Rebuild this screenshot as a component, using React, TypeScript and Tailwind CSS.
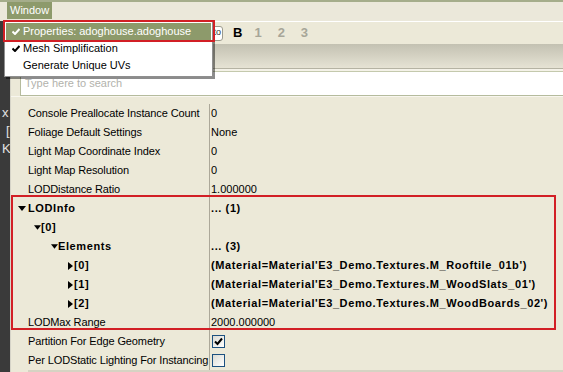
import React from "react";

type Row = {
  name: string;
  value?: string;
  bold?: boolean;
  vbold?: boolean;
  tri?: "down" | "right";
  pad: string;
  box?: string;
  check?: boolean;
};

const rows: Row[] = [
  { name: "Console Preallocate Instance Count", value: "0", pad: "pl-[17px]" },
  { name: "Foliage Default Settings", value: "None", pad: "pl-[17px]" },
  { name: "Light Map Coordinate Index", value: "0", pad: "pl-[17px]" },
  { name: "Light Map Resolution", value: "0", pad: "pl-[17px]" },
  { name: "LODDistance Ratio", value: "1.000000", pad: "pl-[17px]" },
  { name: "LODInfo", value: "... (1)", bold: true, vbold: true, tri: "down", pad: "pl-[7px]", box: "w-[10px]" },
  { name: "[0]", value: "", bold: true, tri: "down", pad: "pl-[23px]", box: "w-[7px]" },
  { name: "Elements", value: "... (3)", bold: true, vbold: true, tri: "down", pad: "pl-[40px]", box: "w-[7px]" },
  { name: "[0]", value: "(Material=Material'E3_Demo.Textures.M_Rooftile_01b')", bold: true, vbold: true, tri: "right", pad: "pl-[57px]", box: "w-[6px]" },
  { name: "[1]", value: "(Material=Material'E3_Demo.Textures.M_WoodSlats_01')", bold: true, vbold: true, tri: "right", pad: "pl-[57px]", box: "w-[6px]" },
  { name: "[2]", value: "(Material=Material'E3_Demo.Textures.M_WoodBoards_02')", bold: true, vbold: true, tri: "right", pad: "pl-[57px]", box: "w-[6px]" },
  { name: "LODMax Range", value: "2000.000000", pad: "pl-[17px]" },
  { name: "Partition For Edge Geometry", check: true, pad: "pl-[17px]" },
  { name: "Per LODStatic Lighting For Instancing", check: false, pad: "pl-[17px]" },
];

function Tri({ dir }: { dir: "down" | "right" }) {
  return dir === "down" ? (
    <svg width="8" height="5" viewBox="0 0 8 5">
      <path d="M0 0H8L4 5Z" fill="#000" />
    </svg>
  ) : (
    <svg width="5" height="8" viewBox="0 0 5 8">
      <path d="M0 0L5 4L0 8Z" fill="#000" />
    </svg>
  );
}

function Check({ color }: { color: string }) {
  return (
    <svg width="8" height="7" viewBox="0 0 8 7">
      <path d="M0.5 3.5L3 6L7.5 1" stroke={color} strokeWidth="2" fill="none" />
    </svg>
  );
}

function CheckBox({ on }: { on: boolean }) {
  return (
    <span className="flex h-[13px] w-[13px] items-center justify-center border border-[#1c5180] bg-linear-to-br from-[#dcdcd4] to-white">
      {on && (
        <svg width="9" height="9" viewBox="0 0 9 9">
          <path d="M1 4.5L3.5 7L8 1.5" stroke="#000" strokeWidth="2" fill="none" />
        </svg>
      )}
    </span>
  );
}

export default function App() {
  return (
    <div className="relative h-[372px] w-[563px] overflow-hidden bg-[#ece9d8] text-[11px] text-black [font-family:'Liberation_Sans',Arial,sans-serif]">
      {/* menu bar */}
      <div className="flex h-[21px] border-t-2 border-[#a5ad8b] bg-[#ebe8da]">
        <span className="ml-[7px] flex h-[17px] items-center bg-[#8d9a6b] px-[3px] text-white">Window</span>
      </div>

      <div className="flex h-[351px] overflow-hidden">
        {/* dark side strip */}
        <div className="flex w-[10px] shrink-0 flex-col overflow-hidden bg-[#3a3a3a] pt-[83px] text-[13px] leading-[18px] text-[#e2e2e2]">
          <span className="pl-[2px]">x</span>
          <span className="pl-[6px]">[</span>
          <span className="pl-[2px]">K</span>
        </div>

        {/* panel */}
        <div className="flex flex-1 flex-col overflow-hidden border-l border-[#d6d4c8]">
          {/* toolbar */}
          <div className="flex h-[23px] shrink-0 items-center border-t border-[#ffffff] bg-[#ece9d8]">
            <span className="ml-[139px] flex h-[15px] w-[73px] items-center justify-end rounded-[3px] border border-[#9c9a8c] bg-white pr-[1px] text-[9px] text-[#333]">
              Auto
            </span>
            <span className="ml-[10px] text-[13px] font-bold">B</span>
            <span className="ml-[12px] text-[13px] font-bold text-[#a7a698]">1</span>
            <span className="ml-[16px] text-[13px] font-bold text-[#a7a698]">2</span>
            <span className="ml-[16px] text-[13px] font-bold text-[#a7a698]">3</span>
          </div>
          {/* tab band */}
          <div className="h-[24px] shrink-0 bg-linear-to-b from-[#c3c1b2] to-[#e6e3d4]" />
          <div className="h-[4px] shrink-0 border-t border-b border-t-[#b5b3a3] border-b-[#c4c9ad] bg-[#f4f2e8]" />
          {/* search */}
          <div className="flex h-[24px] shrink-0 pl-[9px]">
            <div className="flex flex-1 items-center border-l border-b border-[#b5bb9d] bg-white pl-[4px] text-[#b2b2ac]">
              Type here to search
            </div>
          </div>
          <div className="h-[8px] shrink-0 border-t border-[#f8f6ee]" />

          {/* property rows */}
          <div className="flex shrink-0 flex-col">
            {rows.map((r, i) => (
              <div key={i} className="flex h-[19px] shrink-0 items-center">
                <div className={`flex h-full w-[199px] shrink-0 items-center overflow-hidden whitespace-nowrap border-r border-[#aca899] ${r.pad}`}>
                  {r.tri && (
                    <span className={`flex shrink-0 items-center ${r.box}`}>
                      <Tri dir={r.tri} />
                    </span>
                  )}
                  <span className={r.bold ? "font-bold tracking-[0.6px]" : "tracking-[-0.12px]"}>{r.name}</span>
                </div>
                <div className="flex h-full flex-1 items-center whitespace-nowrap pl-[1px]">
                  {r.check !== undefined ? (
                    <span className="pl-[1px]">
                      <CheckBox on={r.check} />
                    </span>
                  ) : (
                    <span className={r.vbold ? "font-bold tracking-[0.6px]" : ""}>{r.value}</span>
                  )}
                </div>
              </div>
            ))}
            <div className="flex h-[19px] shrink-0">
              <div className="w-[17px] shrink-0" />
              <div className="flex-1 bg-[#d6d3c3]" />
            </div>
          </div>
        </div>
      </div>

      {/* dropdown menu (overlay) */}
      <div className="absolute left-[4px] top-[21px] flex h-[56px] w-[209px] flex-col border border-[#8f8f8f] bg-white p-[1px] shadow-[2px_2px_0_rgba(0,0,0,0.45)]">
        <div className="flex h-[17px] shrink-0 items-center bg-[#8d9a6b] text-white">
          <span className="ml-[6px] w-[11px]">
            <Check color="#fff" />
          </span>
          <span>Properties: adoghouse.adoghouse</span>
        </div>
        <div className="flex h-[17px] shrink-0 items-center">
          <span className="ml-[6px] w-[11px]">
            <Check color="#000" />
          </span>
          <span>Mesh Simplification</span>
        </div>
        <div className="flex h-[17px] shrink-0 items-center">
          <span className="ml-[17px]">Generate Unique UVs</span>
        </div>
      </div>

      {/* red annotation boxes */}
      <div className="absolute left-[3px] top-[20px] h-[22px] w-[212px] border-2 border-[#d21f25]" />
      <div className="absolute left-[11px] top-[195px] h-[135px] w-[545px] border-2 border-[#d21f25]" />
    </div>
  );
}
